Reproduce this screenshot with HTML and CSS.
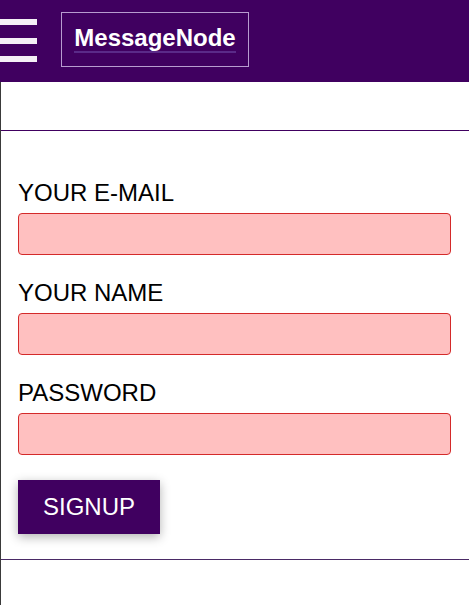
FILE: index.html
```html
<!DOCTYPE html>
<html>
<head>
<meta charset="utf-8">
<link rel="stylesheet" href="styles.css">
</head>
<body>
<header class="topbar">
  <div class="burger">
    <span class="bar"></span>
    <span class="bar"></span>
    <span class="bar"></span>
  </div>
  <a class="logo" href="#"><span class="logo-text">MessageNode</span></a>
</header>
<div class="page">
  <nav class="subnav"></nav>
  <form class="form">
    <label class="label">YOUR E-MAIL</label>
    <input class="field" type="email">
    <label class="label">YOUR NAME</label>
    <input class="field" type="text">
    <label class="label">PASSWORD</label>
    <input class="field" type="password">
    <button class="btn" type="button">SIGNUP</button>
  </form>
  <div class="footer"></div>
</div>
</body>
</html>
```
FILE: styles.css
```css
html, body {
  margin: 0;
  padding: 0;
  background: #ffffff;
  font-family: "Liberation Sans", Arial, sans-serif;
}
.topbar {
  height: 82px;
  background: #400060;
  display: flex;
  align-items: center;
}
.burger {
  width: 37px;
  display: flex;
  flex-direction: column;
  gap: 12.5px;
  margin-top: -1px;
}
.bar {
  display: block;
  height: 6px;
  background: #f4f0f6;
}
.logo {
  margin-left: 24px;
  margin-top: -3px;
  height: 55px;
  box-sizing: border-box;
  width: 188px;
  border: 1px solid #b89cd0;
  color: #ffffff;
  font-weight: bold;
  font-size: 24px;
  display: flex;
  align-items: center;
  justify-content: center;
  text-decoration: none;
}
.logo-text {
  padding-bottom: 1px;
  border-bottom: 2px solid #5a2a88;
  line-height: 24px;
}
.page {
  border-left: 1px solid #3a3a3a;
  min-height: 523px;
}
.subnav {
  height: 48px;
  border-bottom: 1px solid #400060;
}
.form {
  display: flex;
  flex-direction: column;
  align-items: flex-start;
  padding: 48px 18px 0 17px;
}
.label {
  font-size: 24px;
  line-height: 28px;
  color: #000000;
  margin-top: 24px;
}
.label:first-child {
  margin-top: 0;
}
.field {
  box-sizing: border-box;
  margin: 6px 0 0 0;
  width: 100%;
  height: 42px;
  border: 1px solid #d42a2a;
  border-radius: 4px;
  background: #ffc0c0;
}
.btn {
  margin-top: 25px;
  height: 54px;
  padding: 0 25px;
  background: #400060;
  color: #ffffff;
  border: none;
  font-family: "Liberation Sans", Arial, sans-serif;
  font-size: 24px;
  box-shadow: 0 3px 10px rgba(0, 0, 0, 0.3);
}
.footer {
  margin-top: 25px;
  border-top: 1px solid #4a2a66;
}
```
